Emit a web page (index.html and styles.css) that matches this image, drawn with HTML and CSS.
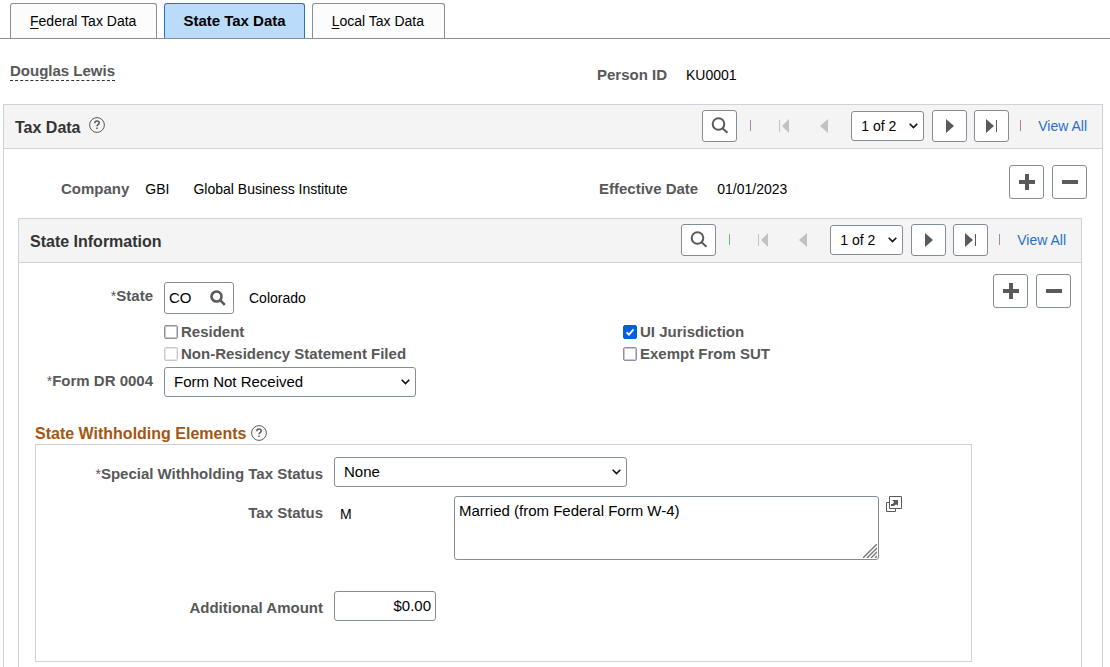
FILE: index.html
```html
<!DOCTYPE html>
<html lang="en">
<head>
    <meta charset="UTF-8">
    <meta name="viewport" content="width=device-width, initial-scale=1.0">
    <title>State Tax Data</title>
    <link rel="stylesheet" href="styles.css">
</head>
<body>
    <nav class="tabs">
        <a class="tab" href="#federal"><u>F</u>ederal Tax Data</a>
        <a class="tab active" href="#state">State Tax Data</a>
        <a class="tab" href="#local"><u>L</u>ocal Tax Data</a>
    </nav>

    <header class="person">
        <div><span class="name">Douglas Lewis</span></div>
        <div class="person-id"><span class="label">Person ID</span><span>KU0001</span></div>
    </header>

    <section class="panel tax-panel">
        <div class="panel-header">
            <h2>Tax Data</h2>
            <button class="help" aria-label="Tax Data help">
                <svg width="16" height="16" viewBox="0 0 16 16"><circle cx="8" cy="8" r="7.4"/><path d="M5.8 6.3c0-1.5 1-2.2 2.2-2.2s2.2.8 2.2 1.9c0 1.6-2.2 1.7-2.2 3.2M8 10.6v1.5"/></svg>
            </button>
            <div class="pager">
                <button class="btn search" aria-label="Find"><svg width="18" height="18" viewBox="0 0 18 18"><circle cx="7.500" cy="7" r="5.8"/><path d="M11.500 11.200l5 4.600"/></svg></button>
                <span class="sep"></span>
                <button class="arrow first" disabled aria-label="First"><svg width="11" height="14" viewBox="0 0 11 14"><path d="M0 1h1v12H0zM10 0v14L3 7z"/></svg></button>
                <button class="arrow prev" disabled aria-label="Previous"><svg width="8" height="14" viewBox="0 0 8 14"><path d="M8 0v14L0 7z"/></svg></button>
                <select class="page-select" aria-label="Tax Data row"><option>1 of 2</option><option>2 of 2</option></select>
                <button class="btn next" aria-label="Next"><svg width="8" height="14" viewBox="0 0 8 14"><path d="M0 0v14l8-7z"/></svg></button>
                <button class="btn last" aria-label="Last"><svg width="11" height="14" viewBox="0 0 11 14"><path d="M0 0v14l8-7zM10 1h1v12h-1z"/></svg></button>
                <span class="sep end"></span>
                <a class="view-all" href="#all">View All</a>
            </div>
        </div>

        <div class="company-row">
            <div class="company"><span class="label">Company</span><span class="code">GBI</span><span>Global Business Institute</span></div>
            <div class="effective"><span class="label">Effective Date</span><span>01/01/2023</span></div>
            <div class="row-actions">
                <button class="btn" aria-label="Add a row"><svg width="16" height="16" viewBox="0 0 16 16"><path d="M6 0h4v6h6v4h-6v6H6v-6H0V6h6z"/></svg></button>
                <button class="btn" aria-label="Delete row"><svg width="16" height="16" viewBox="0 0 16 16"><path d="M0 6h16v4H0z"/></svg></button>
            </div>
        </div>

        <section class="panel state-panel">
            <div class="panel-header">
                <h2>State Information</h2>
                <div class="pager">
                    <button class="btn search" aria-label="Find"><svg width="18" height="18" viewBox="0 0 18 18"><circle cx="7.500" cy="7" r="5.8"/><path d="M11.500 11.200l5 4.600"/></svg></button>
                    <span class="sep green"></span>
                    <button class="arrow first" disabled aria-label="First"><svg width="11" height="14" viewBox="0 0 11 14"><path d="M0 1h1v12H0zM10 0v14L3 7z"/></svg></button>
                    <button class="arrow prev" disabled aria-label="Previous"><svg width="8" height="14" viewBox="0 0 8 14"><path d="M8 0v14L0 7z"/></svg></button>
                    <select class="page-select" aria-label="State row"><option>1 of 2</option><option>2 of 2</option></select>
                    <button class="btn next" aria-label="Next"><svg width="8" height="14" viewBox="0 0 8 14"><path d="M0 0v14l8-7z"/></svg></button>
                    <button class="btn last" aria-label="Last"><svg width="11" height="14" viewBox="0 0 11 14"><path d="M0 0v14l8-7zM10 1h1v12h-1z"/></svg></button>
                    <span class="sep end"></span>
                    <a class="view-all" href="#all-states">View All</a>
                </div>
            </div>

            <div class="state-top">
                <div class="state-form">
                    <label class="label" for="state"><span class="req">*</span>State</label>
                    <div class="state-field">
                        <div class="lookup">
                            <input type="text" id="state" value="CO">
                            <button aria-label="Look up State"><svg width="16" height="16" viewBox="0 0 16 16"><circle cx="6.5" cy="6.5" r="5"/><path d="M10.2 10.2l4.6 4.6"/></svg></button>
                        </div>
                        <span>Colorado</span>
                    </div>
                    <div class="checks">
                        <label class="check"><input type="checkbox">Resident</label>
                        <label class="check"><input type="checkbox" checked>UI Jurisdiction</label>
                        <label class="check"><input type="checkbox" disabled>Non-Residency Statement Filed</label>
                        <label class="check"><input type="checkbox">Exempt From SUT</label>
                    </div>
                    <label class="label" for="form-dr"><span class="req">*</span>Form DR 0004</label>
                    <select id="form-dr" class="field form-select"><option>Form Not Received</option><option>Form Received</option></select>
                </div>
                <div class="row-actions">
                    <button class="btn" aria-label="Add state"><svg width="16" height="16" viewBox="0 0 16 16"><path d="M6 0h4v6h6v4h-6v6H6v-6H0V6h6z"/></svg></button>
                    <button class="btn" aria-label="Delete state"><svg width="16" height="16" viewBox="0 0 16 16"><path d="M0 6h16v4H0z"/></svg></button>
                </div>
            </div>

            <div class="withholding">
                <div class="group-title">
                    <h3>State Withholding Elements</h3>
                    <button class="help" aria-label="State Withholding Elements help">
                        <svg width="16" height="16" viewBox="0 0 16 16"><circle cx="8" cy="8" r="7.4"/><path d="M5.8 6.3c0-1.5 1-2.2 2.2-2.2s2.2.8 2.2 1.9c0 1.6-2.2 1.7-2.2 3.2M8 10.6v1.5"/></svg>
                    </button>
                </div>
                <div class="group-box">
                    <label class="label" for="special"><span class="req">*</span>Special Withholding Tax Status</label>
                    <select id="special" class="field special-select"><option>None</option></select>

                    <label class="label" for="status-text">Tax Status</label>
                    <div class="status-row">
                        <span class="status-code">M</span>
                        <div class="textarea-wrap">
                            <textarea id="status-text" class="field">Married (from Federal Form W-4)</textarea>
                            <svg class="grip" width="14" height="14" viewBox="0 0 14 14"><path d="M0 14L14 0M4 14L14 4M8 14l6-6M12 14l2-2"/></svg>
                        </div>
                        <button class="popout" aria-label="Open in a new window">
                            <svg width="16" height="16" viewBox="0 0 16 16"><path d="M3.5.5h12v12h-12zM3 6.500H.5v9h9V13"/><path class="solid" d="M6 4h6v6l-1.800-1.800L8 10H5V8h1.500l1.800-2z"/></svg>
                        </button>
                    </div>

                    <label class="label" for="amount">Additional Amount</label>
                    <input type="text" id="amount" class="field amount" value="$0.00">
                </div>
            </div>
        </section>
    </section>
</body>
</html>
```
FILE: styles.css
```css
* {
    box-sizing: border-box;
}
body {
    margin: 0;
    font-family: "Liberation Sans", Arial, sans-serif;
    font-size: 14px;
    line-height: 18px;
    color: #000;
    background-color: #fff;
}
h2, h3 {
    margin: 0;
    font-size: 16px;
}
button, input, select, textarea {
    font: inherit;
    color: inherit;
    margin: 0;
}
button {
    display: flex;
    align-items: center;
    justify-content: center;
    padding: 0;
    border: none;
    background: none;
    cursor: pointer;
}
svg {
    display: block;
    fill: #5a5a5a;
}
.label {
    font-size: 15px;
    font-weight: bold;
    color: #585858;
    white-space: nowrap;
}
.req {
    font-size: 14px;
    font-weight: normal;
}

/* tabs */
.tabs {
    display: flex;
    gap: 7px;
    padding: 3px 10px 0;
    border-bottom: 1px solid #878f96;
}
.tab {
    height: 35px;
    padding: 8px 20px 0 19px;
    border: 1px solid #878f96;
    border-bottom: none;
    border-radius: 3px 3px 0 0;
    background-color: #fcfcfc;
    color: #000;
    text-decoration: none;
}
.tab u {
    text-underline-offset: 2px;
}
.tab.active {
    padding: 8px 18px 0;
    background-color: #badcfa;
    border-color: #2573ce;
    font-size: 15px;
    font-weight: bold;
}

.person {
    display: grid;
    grid-template-columns: 587fr 503fr;
    padding: 23px 10px 20px;
}
.name {
    display: inline-block;
    font-size: 15px;
    font-weight: bold;
    color: #585858;
    border-bottom: 1px dashed #333;
}
.person-id {
    display: flex;
    gap: 19px;
    padding-top: 4px;
}

/* panels */
.panel {
    border: 1px solid #ced3d9;
}
.tax-panel {
    margin: 0 7px 0 3px;
    padding-bottom: 16px;
}
.state-panel {
    margin: 0 20px 0 14px;
    padding-bottom: 16px;
}
.panel-header {
    display: flex;
    align-items: center;
    height: 44px;
    padding: 0 15px 0 11px;
    border-bottom: 1px solid #ced3d9;
    background-color: #f4f4f4;
}
.panel-header h2 {
    padding-top: 2px;
    color: #333;
}
.help {
    margin: 0 0 3px 8px;
}
.help svg, .search svg, .lookup svg, .popout svg {
    fill: none;
    stroke: #5a5a5a;
}
.help path {
    stroke-width: 1.5;
}
.pager {
    display: flex;
    align-items: center;
    margin-left: auto;
    padding-bottom: 2px;
}
.btn {
    width: 35px;
    height: 32px;
    border: 1px solid #848d96;
    border-radius: 3px;
    background-color: #fff;
}
.search svg {
    stroke-width: 2;
}
.next {
    margin: 0 7px 0 8px;
}
.sep {
    width: 1px;
    height: 11px;
    margin: 0 28px 0 13px;
    background-color: #a882a8;
}
.sep.green {
    background-color: #79b579;
}
.sep.end {
    margin: 0 17px 0 11px;
}
.arrow svg {
    fill: #c2c2c2;
}
.first {
    margin-right: 30px;
}
.prev {
    margin-right: 23px;
}
.page-select, .field {
    border: 1px solid #848d96;
    border-radius: 3px;
    background-color: #fff;
}
select {
    appearance: none;
    background-image: url("data:image/svg+xml,%3Csvg xmlns='http://www.w3.org/2000/svg' width='9' height='6'%3E%3Cpath d='M.7 .8l3.800 3.800L8.300 .8' fill='none' stroke='%23111' stroke-width='1.600'/%3E%3C/svg%3E");
    background-repeat: no-repeat;
    background-position: right 5px center;
}
.page-select {
    width: 73px;
    height: 30px;
    padding: 0 9px;
}
.view-all {
    color: #2a6fc9;
    text-decoration: none;
}

.company-row {
    display: grid;
    grid-template-columns: 538fr 410fr auto;
    padding: 16px 15px 19px 57px;
}
.company, .effective {
    display: flex;
    gap: 19px;
    padding-top: 15px;
}
.company {
    gap: 16px;
}
.company .code {
    padding-right: 8px;
}
.row-actions {
    display: flex;
    gap: 8px;
}
.row-actions .btn {
    height: 34px;
}

/* state fields */
.state-top {
    display: flex;
    justify-content: space-between;
    padding: 11px 10px 0 0;
}
.state-form {
    display: grid;
    grid-template-columns: 134px 1fr;
    column-gap: 11px;
    flex: 1;
    padding-top: 8px;
}
.state-form > .label {
    padding-top: 5px;
    text-align: right;
}
.state-field {
    display: flex;
    align-items: center;
    gap: 15px;
}
.lookup {
    display: flex;
    width: 70px;
    height: 32px;
    border: 1px solid #848d96;
    border-radius: 3px;
}
.lookup input {
    width: 45px;
    padding: 0 4px;
    border: none;
    background: none;
    font-size: 15px;
}
.lookup svg {
    stroke-width: 2.6;
}
.checks {
    grid-column: 2;
    display: grid;
    grid-template-columns: 459px 1fr;
    padding: 7px 0 2px;
}
.check {
    display: flex;
    align-items: center;
    gap: 3px;
    height: 22px;
    font-size: 15px;
    font-weight: bold;
    color: #585858;
}
.check input {
    appearance: none;
    width: 14px;
    height: 14px;
    border: 1px solid #8f8f9d;
    border-radius: 2px;
    background: #fff;
    box-shadow: inset 0 0 0 1px #c9c9d1;
}
.check input:disabled {
    border-color: #c8c8ce;
    box-shadow: inset 0 0 0 1px #e8e8ec;
}
.check input:checked {
    border-color: #0061e0;
    background: #0061e0 url("data:image/svg+xml,%3Csvg xmlns='http://www.w3.org/2000/svg' width='12' height='12'%3E%3Cpath d='M2.500 6.300l2.500 2.400 4.500-5.400' fill='none' stroke='%23fff' stroke-width='1.800'/%3E%3C/svg%3E") center no-repeat;
    box-shadow: none;
}
.field {
    height: 30px;
    padding: 0 9px 1px;
    font-size: 15px;
}
.form-select {
    width: 252px;
}

.withholding {
    margin: 27px 109px 0 16px;
}
.group-title {
    display: flex;
    align-items: center;
    height: 20px;
}
.group-title h3 {
    color: #a6550f;
}
.group-title .help {
    margin: 0 0 3px 5px;
}
.group-box {
    display: grid;
    grid-template-columns: 287px 1fr;
    gap: 9px 11px;
    border: 1px solid #ced3d9;
    padding: 12px 0 40px;
}
.group-box > .label {
    padding-top: 8px;
    text-align: right;
}
.special-select {
    width: 293px;
}
.status-row {
    display: flex;
    align-items: flex-start;
    padding-bottom: 22px;
}
.status-code {
    width: 120px;
    padding: 9px 6px 0;
}
.textarea-wrap {
    position: relative;
}
textarea.field {
    display: block;
    width: 425px;
    height: 64px;
    padding: 5px 4px;
    resize: none;
}
.grip {
    position: absolute;
    right: 2px;
    bottom: 2px;
    stroke: #777;
    stroke-width: 1.4;
}
.popout {
    margin-left: 7px;
}
.popout .solid {
    fill: #5a5a5a;
    stroke: none;
}
.amount {
    width: 102px;
    padding: 0 4px 1px;
    text-align: right;
}
```
